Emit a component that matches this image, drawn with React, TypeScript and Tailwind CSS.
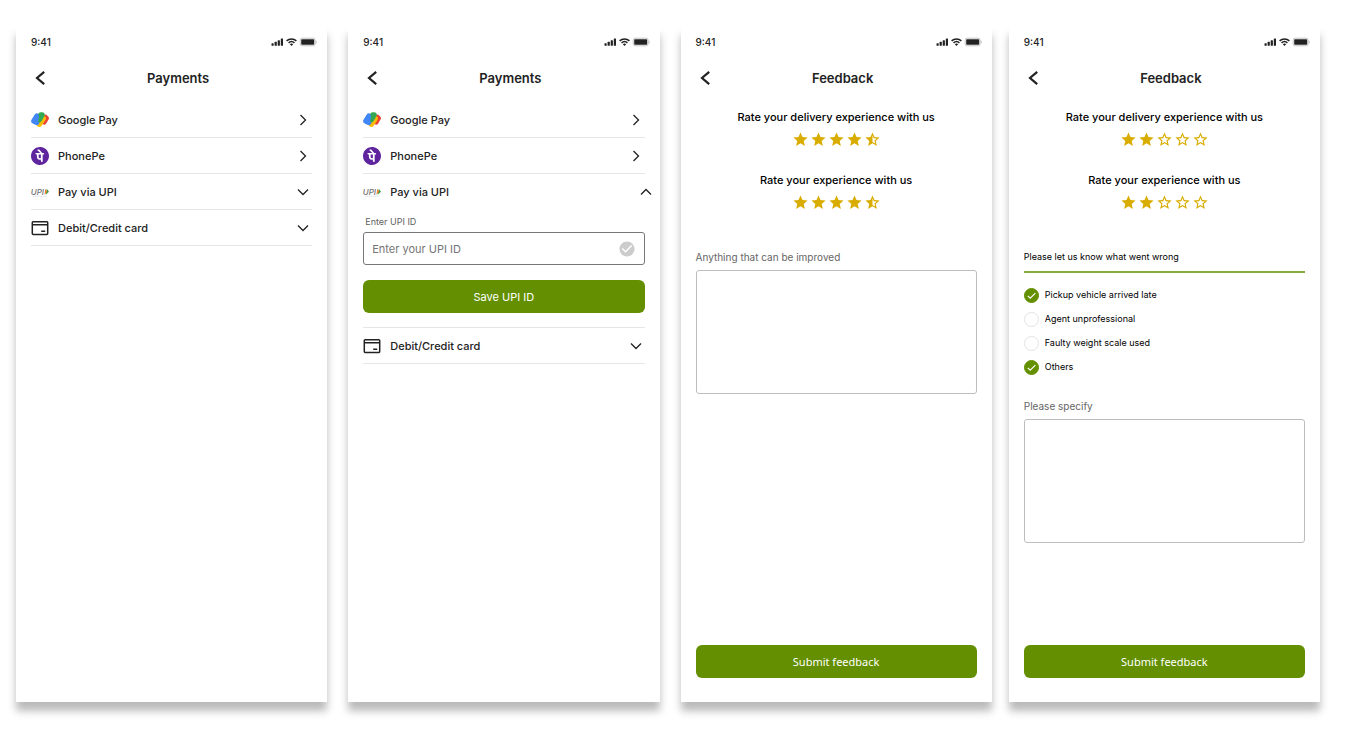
import React, { useState } from "react";
import { MdCheckCircle, MdStar, MdStarBorder, MdStarHalf } from "react-icons/md";
import { SiPhonepe } from "react-icons/si";

const StatusBar: React.FC = () => (
  <div className="flex h-8 items-center justify-between pl-[15px] pr-2.5">
    <span className="text-[10px] font-medium leading-4 text-[#222222]">9:41</span>
    <svg width="46" height="10" viewBox="0 0 46 10" aria-hidden="true">
      <g fill="#222222">
        <rect x="0.5" y="6.2" width="2.2" height="2.5" rx="0.5" />
        <rect x="3.6" y="4.8" width="2.2" height="3.9" rx="0.5" />
        <rect x="6.7" y="3.2" width="2.2" height="5.5" rx="0.5" />
        <rect x="9.8" y="1.4" width="2.2" height="7.3" rx="0.5" />
      </g>
      <g fill="none" stroke="#222222" strokeWidth="1.5">
        <path d="M15.6 3.9C18.4 1.2 22.6 1.2 25.4 3.9" />
        <path d="M17.6 5.9C19.3 4.3 21.7 4.3 23.4 5.9" />
      </g>
      <path d="M20.5 9L18.9 7.2C19.8 6.4 21.2 6.4 22.1 7.2Z" fill="#222222" />
      <rect x="29.2" y="1.2" width="15" height="7.6" rx="2" fill="#ffffff" stroke="#c4c4c4" />
      <rect x="30.2" y="2.2" width="13" height="5.6" rx="0.8" fill="#222222" />
      <path d="M45.4 3.8v2.4" stroke="#c4c4c4" strokeWidth="0.8" />
    </svg>
  </div>
);

interface ScreenProps {
  title: string;
  className?: string;
  children: React.ReactNode;
}

const Screen: React.FC<ScreenProps> = ({ title, className = "", children }) => (
  <section
    className={`flex min-w-0 flex-1 flex-col bg-white shadow-[0_9px_8px_rgba(0,0,0,0.27)] ${className}`}
  >
    <StatusBar />
    <header className="flex h-10 items-center pl-[15px] pr-5">
      <button type="button" aria-label="Back" className="flex w-[18px] justify-center">
        <svg width="12" height="16" viewBox="0 0 12 16" fill="none" stroke="#222222" strokeWidth="2.2">
          <path d="M10.2 1.8L3 8l7.2 6.2" />
        </svg>
      </button>
      <h1 className="flex-1 text-center text-[13px] font-semibold leading-4 text-[#222222]">{title}</h1>
    </header>
    <div className="flex flex-1 flex-col px-[15px] pb-6">{children}</div>
  </section>
);

const GooglePayLogo: React.FC = () => (
  <svg width="18" height="18" viewBox="0 0 18 18" fill="none" strokeLinecap="round" strokeLinejoin="round">
    <path d="M14.4 6.2l1 1-2.4 4" stroke="#ea4335" strokeWidth="5" />
    <path d="M12.2 7.4L8.4 13.2" stroke="#fbbc04" strokeWidth="5.4" />
    <path d="M6 5.2L3 10l2.6 1.4" stroke="#4285f4" strokeWidth="5.6" />
    <path d="M9.8 3.8h1.4L8.4 8.8" stroke="#34a853" strokeWidth="5.2" />
    <path d="M5.8 5.4L4.8 10.6" stroke="#4285f4" strokeWidth="4.6" />
  </svg>
);

const UpiLogo: React.FC = () => (
  <svg width="18" height="18" viewBox="0 0 18 18">
    <text
      x="-0.2"
      y="11.6"
      fontFamily="Inter, sans-serif"
      fontSize="8"
      fontStyle="italic"
      fontWeight="500"
      fill="#6f6f6f"
    >
      UPI
    </text>
    <path d="M15.8 5.8L18 8.8l-3.4 3z" fill="#2f9b4a" />
    <path d="M14.4 5.8l1.9 3-2.9 3z" fill="#f07c2a" />
    <path d="M2 13.3h14" stroke="#d9d9d9" strokeWidth="0.8" strokeDasharray="1.4 0.5" />
  </svg>
);

const CardIcon: React.FC = () => (
  <svg width="18" height="18" viewBox="0 0 18 18" fill="none" stroke="#222222" strokeWidth="1.5">
    <rect x="1.3" y="2.8" width="15.4" height="12.6" rx="0.8" />
    <path d="M1.2 5.8h15.6M10.2 12.2h4" />
  </svg>
);

type Direction = "right" | "down" | "up";

const chevrons: Record<Direction, string> = {
  right: "M6.5 4l5 5-5 5",
  down: "M4 6.5l5 5 5-5",
  up: "M4 11.5l5-5 5 5",
};

interface MethodRowProps {
  icon: React.ReactNode;
  label: string;
  direction: Direction;
  onClick?: () => void;
}

const MethodRow: React.FC<MethodRowProps> = ({ icon, label, direction, onClick }) => (
  <button
    type="button"
    onClick={onClick}
    className={`flex h-9 w-full shrink-0 items-center gap-[9px] border-b text-left ${
      direction === "up" ? "border-transparent" : "border-[#e6e6e6]"
    }`}
  >
    {icon}
    <span className="flex-1 text-[11px] font-medium leading-4 text-[#222222]">{label}</span>
    <svg
      width="18"
      height="18"
      viewBox="0 0 18 18"
      fill="none"
      stroke="#222222"
      strokeWidth="1.3"
      className={direction === "up" ? "-mr-2.5" : ""}
    >
      <path d={chevrons[direction]} />
    </svg>
  </button>
);

const Payments: React.FC<{ defaultOpen?: boolean }> = ({ defaultOpen = false }) => {
  const [open, setOpen] = useState(defaultOpen);

  return (
    <Screen title="Payments">
      <div className="mt-1">
        <MethodRow icon={<GooglePayLogo />} label="Google Pay" direction="right" />
        <MethodRow
          icon={<SiPhonepe size={18} color="#5f259f" />}
          label="PhonePe"
          direction="right"
        />
        <MethodRow
          icon={<UpiLogo />}
          label="Pay via UPI"
          direction={open ? "up" : "down"}
          onClick={() => setOpen(!open)}
        />
        {open && (
          <form className="border-b border-[#e6e6e6] pb-3.5 pt-1" onSubmit={(e) => e.preventDefault()}>
            <label htmlFor="upi-id" className="block pl-0.5 text-[9px] leading-4 text-[#5f5f5f]">
              Enter UPI ID
            </label>
            <div className="mt-0.5 flex h-[33px] items-center rounded-[3px] border border-[#777777] px-2">
              <input
                id="upi-id"
                type="text"
                placeholder="Enter your UPI ID"
                className="min-w-0 flex-1 text-[11px] leading-4 text-[#222222] outline-none placeholder:text-[#757575]"
              />
              <MdCheckCircle size={18} color="#cccccc" />
            </div>
            <button
              type="submit"
              className="mt-[15px] h-[33px] w-full rounded-md bg-[#638f00] text-[11px] leading-4 text-white"
            >
              Save UPI ID
            </button>
          </form>
        )}
        <MethodRow icon={<CardIcon />} label="Debit/Credit card" direction="down" />
      </div>
    </Screen>
  );
};

const Rating: React.FC<{ label: string; initial: number }> = ({ label, initial }) => {
  const [value, setValue] = useState(initial);

  return (
    <div className="flex flex-col items-center">
      <h2 className="text-[11px] font-medium leading-4 text-black">{label}</h2>
      <div className="mt-1.5 flex" role="group" aria-label={label}>
        {[1, 2, 3, 4, 5].map((n) => {
          const Star = value >= n ? MdStar : value >= n - 0.5 ? MdStarHalf : MdStarBorder;
          return (
            <button
              key={n}
              type="button"
              aria-label={`${n} of 5`}
              onClick={() => setValue(n)}
              className="flex size-[18px] items-start justify-center"
            >
              <Star size={17} color="#d9ad00" />
            </button>
          );
        })}
      </div>
    </div>
  );
};

const Ratings: React.FC<{ initial: number }> = ({ initial }) => (
  <div className="mt-[11px] flex flex-col gap-[23px]">
    <Rating label="Rate your delivery experience with us" initial={initial} />
    <Rating label="Rate your experience with us" initial={initial} />
  </div>
);

const CommentBox: React.FC<{ id: string; label: string }> = ({ id, label }) => (
  <>
    <label htmlFor={id} className="text-[10px] leading-4 text-[#666666]">
      {label}
    </label>
    <textarea
      id={id}
      className="mt-[5px] h-[124px] w-full shrink-0 resize-none rounded-[3px] border border-[#bdbdbd] p-2 text-[10px] outline-none"
    />
  </>
);

const SubmitButton: React.FC = () => (
  <button
    type="submit"
    className="mt-auto h-[33px] w-full shrink-0 rounded-md bg-[#638f00] font-['Noto_Sans',sans-serif] text-[11px] leading-4 text-white"
  >
    Submit feedback
  </button>
);

const Feedback: React.FC = () => (
  <Screen title="Feedback">
    <form className="flex flex-1 flex-col" onSubmit={(e) => e.preventDefault()}>
      <Ratings initial={4.5} />
      <div className="mb-6 mt-[37px] flex flex-col">
        <CommentBox id="improve" label="Anything that can be improved" />
      </div>
      <SubmitButton />
    </form>
  </Screen>
);

const reasons = [
  { label: "Pickup vehicle arrived late", checked: true },
  { label: "Agent unprofessional", checked: false },
  { label: "Faulty weight scale used", checked: false },
  { label: "Others", checked: true },
];

const FeedbackIssues: React.FC = () => (
  <Screen title="Feedback" className="-ml-1">
    <form className="flex flex-1 flex-col" onSubmit={(e) => e.preventDefault()}>
      <Ratings initial={2} />
      <fieldset className="mt-[37px]">
        <legend className="w-full border-b-2 border-[#86ab3b] pb-1.5 text-[9px] leading-4 text-black">
          Please let us know what went wrong
        </legend>
        <div className="pt-2.5">
          {reasons.map((reason) => (
            <label
              key={reason.label}
              className="flex h-6 items-center gap-1.5 text-[9px] leading-4 text-black"
            >
              <span className="grid size-[15px]">
                <input
                  type="checkbox"
                  defaultChecked={reason.checked}
                  className="peer col-start-1 row-start-1 size-[15px] appearance-none rounded-full border border-[#e3e3e3] checked:border-[#638f00] checked:bg-[#638f00]"
                />
                <svg
                  viewBox="0 0 15 15"
                  fill="none"
                  stroke="white"
                  strokeWidth="1.2"
                  className="pointer-events-none invisible col-start-1 row-start-1 size-[15px] peer-checked:visible"
                >
                  <path d="M3.8 7.9l2.4 2.3 5.2-5.1" />
                </svg>
              </span>
              {reason.label}
            </label>
          ))}
        </div>
      </fieldset>
      <div className="mb-6 mt-[19px] flex flex-col">
        <CommentBox id="specify" label="Please specify" />
      </div>
      <SubmitButton />
    </form>
  </Screen>
);

const App: React.FC = () => (
  <main className="flex min-h-screen gap-[21px] bg-white pb-[37px] pl-4 pr-[27px] pt-[26px] font-['Inter',sans-serif]">
    <Payments />
    <Payments defaultOpen />
    <Feedback />
    <FeedbackIssues />
  </main>
);

export default App;
